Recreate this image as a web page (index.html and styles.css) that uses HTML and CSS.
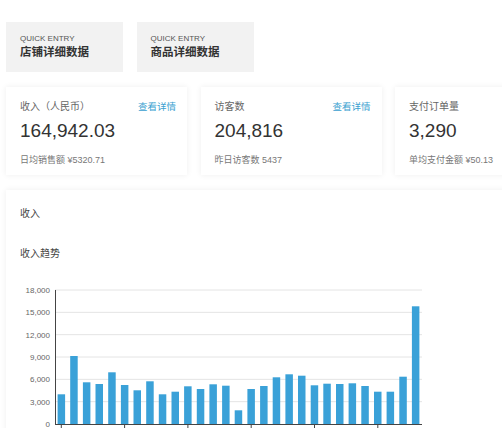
FILE: index.html
```html
<!DOCTYPE html>
<html lang="zh">
<head>
<meta charset="utf-8">
<link rel="stylesheet" href="styles.css">
</head>
<body>
<div class="page">
  <div class="quick-row">
    <div class="quick-card">
      <div class="quick-label">QUICK ENTRY</div>
      <div class="quick-title">店铺详细数据</div>
    </div>
    <div class="quick-card">
      <div class="quick-label">QUICK ENTRY</div>
      <div class="quick-title">商品详细数据</div>
    </div>
  </div>

  <div class="stat-row">
    <div class="stat-card">
      <div class="stat-head"><span class="stat-title">收入（人民币）</span><span class="stat-link">查看详情</span></div>
      <div class="stat-value">164,942.03</div>
      <div class="stat-sub">日均销售额 ¥5320.71</div>
    </div>
    <div class="stat-card">
      <div class="stat-head"><span class="stat-title">访客数</span><span class="stat-link">查看详情</span></div>
      <div class="stat-value">204,816</div>
      <div class="stat-sub">昨日访客数 5437</div>
    </div>
    <div class="stat-card">
      <div class="stat-head"><span class="stat-title">支付订单量</span></div>
      <div class="stat-value">3,290</div>
      <div class="stat-sub">单均支付金额 ¥50.13</div>
    </div>
  </div>

  <div class="chart-card">
    <div class="chart-section">收入</div>
    <div class="chart-title">收入趋势</div>
    <svg class="chart" width="480" height="160" viewBox="0 0 480 160">
      <g class="grid">
        <line x1="49" y1="10" x2="416" y2="10"/>
        <line x1="49" y1="32.33" x2="416" y2="32.33"/>
        <line x1="49" y1="54.67" x2="416" y2="54.67"/>
        <line x1="49" y1="77" x2="416" y2="77"/>
        <line x1="49" y1="99.33" x2="416" y2="99.33"/>
        <line x1="49" y1="121.67" x2="416" y2="121.67"/>
      </g>
      <g class="ylabels">
        <text x="44" y="13">18,000</text>
        <text x="44" y="35.3">15,000</text>
        <text x="44" y="57.7">12,000</text>
        <text x="44" y="80">9,000</text>
        <text x="44" y="102.3">6,000</text>
        <text x="44" y="124.7">3,000</text>
        <text x="44" y="147">0</text>
      </g>
      <g class="bars">
        <rect x="51.6" y="114.3" width="7.5" height="29.7"/>
        <rect x="64.2" y="76" width="7.5" height="68"/>
        <rect x="76.9" y="102.3" width="7.5" height="41.7"/>
        <rect x="89.5" y="104" width="7.5" height="40"/>
        <rect x="102.2" y="92.3" width="7.5" height="51.7"/>
        <rect x="114.9" y="105" width="7.5" height="39"/>
        <rect x="127.5" y="110.3" width="7.5" height="33.7"/>
        <rect x="140.2" y="101.3" width="7.5" height="42.7"/>
        <rect x="152.8" y="114.3" width="7.5" height="29.7"/>
        <rect x="165.5" y="111.7" width="7.5" height="32.3"/>
        <rect x="178.1" y="106.3" width="7.5" height="37.7"/>
        <rect x="190.8" y="109" width="7.5" height="35"/>
        <rect x="203.4" y="104.3" width="7.5" height="39.7"/>
        <rect x="216.1" y="105.7" width="7.5" height="38.3"/>
        <rect x="228.7" y="130.3" width="7.5" height="13.7"/>
        <rect x="241.4" y="109" width="7.5" height="35"/>
        <rect x="254.1" y="106" width="7.5" height="38"/>
        <rect x="266.7" y="97.3" width="7.5" height="46.7"/>
        <rect x="279.4" y="94.3" width="7.5" height="49.7"/>
        <rect x="292" y="95.7" width="7.5" height="48.3"/>
        <rect x="304.7" y="105.3" width="7.5" height="38.7"/>
        <rect x="317.3" y="103.7" width="7.5" height="40.3"/>
        <rect x="330" y="104" width="7.5" height="40"/>
        <rect x="342.6" y="103.3" width="7.5" height="40.7"/>
        <rect x="355.3" y="106" width="7.5" height="38"/>
        <rect x="368" y="111.7" width="7.5" height="32.3"/>
        <rect x="380.6" y="111.7" width="7.5" height="32.3"/>
        <rect x="393.3" y="96.7" width="7.5" height="47.3"/>
        <rect x="405.9" y="26.3" width="7.5" height="117.7"/>
      </g>
      <g class="axis">
        <line x1="49.5" y1="10" x2="49.5" y2="144"/>
        <line x1="49" y1="144.5" x2="416" y2="144.5"/>
        <line x1="55.3" y1="144" x2="55.3" y2="149"/>
        <line x1="118.6" y1="144" x2="118.6" y2="149"/>
        <line x1="181.9" y1="144" x2="181.9" y2="149"/>
        <line x1="245.2" y1="144" x2="245.2" y2="149"/>
        <line x1="308.5" y1="144" x2="308.5" y2="149"/>
        <line x1="371.8" y1="144" x2="371.8" y2="149"/>
      </g>
    </svg>
  </div>
</div>
</body>
</html>
```

FILE: styles.css
```css
html, body {
  margin: 0;
  padding: 0;
  background: #ffffff;
  overflow: hidden;
}
body {
  font-family: "Liberation Sans", "Noto Sans CJK SC", sans-serif;
  color: #333;
  width: 502px;
  height: 428px;
}
.page {
  padding: 22px 0 0 6px;
  width: 620px;
}
.quick-row {
  display: flex;
  gap: 13.5px;
}
.quick-card {
  box-sizing: border-box;
  width: 117px;
  height: 50px;
  background: #f2f2f2;
  padding: 12px 14px 0 14px;
}
.quick-label {
  font-size: 8px;
  line-height: 10px;
  color: #555;
}
.quick-title {
  margin-top: 1px;
  font-size: 11.5px;
  line-height: 14px;
  font-weight: bold;
  color: #333;
}
.stat-row {
  display: flex;
  gap: 13.5px;
  margin-top: 15px;
}
.stat-card {
  box-sizing: border-box;
  flex: 0 0 181px;
  height: 88px;
  background: #fff;
  box-shadow: 0 0 6px rgba(0, 0, 0, 0.07);
  padding: 13px 11px 0 14px;
}
.stat-head {
  display: flex;
  justify-content: space-between;
  font-size: 10px;
  line-height: 14px;
}
.stat-title {
  color: #666;
}
.stat-link {
  color: #3a9fd0;
  font-size: 9.5px;
}
.stat-value {
  margin-top: 6px;
  font-size: 19px;
  line-height: 22px;
  color: #333;
}
.stat-sub {
  margin-top: 12px;
  font-size: 9px;
  line-height: 12px;
  color: #777;
}
.chart-card {
  box-sizing: border-box;
  width: 570px;
  height: 260px;
  margin-top: 15px;
  background: #fff;
  box-shadow: 0 0 6px rgba(0, 0, 0, 0.07);
  padding-top: 17px;
}
.chart-section,
.chart-title {
  font-size: 10px;
  line-height: 14px;
  color: #444;
  padding-left: 14px;
}
.chart-title {
  margin-top: 26px;
}
.chart {
  display: block;
  margin-top: 19px;
}
.grid line {
  stroke: #e4e4e4;
  stroke-width: 1;
}
.ylabels text {
  font-family: "Liberation Sans", sans-serif;
  font-size: 8px;
  fill: #666;
  text-anchor: end;
}
.bars rect {
  fill: #3aa1d8;
}
.axis line {
  stroke: #444;
  stroke-width: 1;
}
```
